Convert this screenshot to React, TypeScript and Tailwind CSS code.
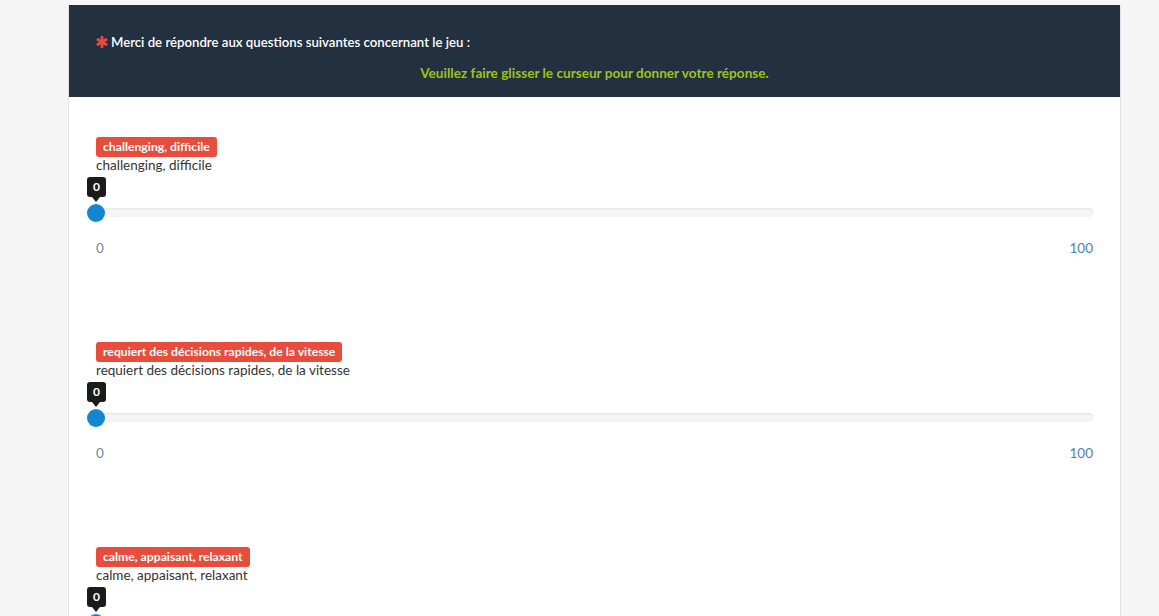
const questions = [
  "challenging, difficile",
  "requiert des décisions rapides, de la vitesse",
  "calme, appaisant, relaxant",
];

const Asterisk = () => (
  <svg width="12" height="12" viewBox="0 0 12 12" className="mr-[3px] inline-block">
    <g fill="#e74c3c">
      <rect x="4.6" y="0" width="2.8" height="12" rx="0.6" />
      <rect x="4.6" y="0" width="2.8" height="12" rx="0.6" transform="rotate(60 6 6)" />
      <rect x="4.6" y="0" width="2.8" height="12" rx="0.6" transform="rotate(-60 6 6)" />
    </g>
  </svg>
);

// valeur à 0 : poignée et bulle collées au début de la piste
const Slider = () => (
  <div className="flex flex-col">
    <div className="relative h-[27px]">
      <div className="absolute left-[-9px] top-0 flex h-[20px] w-[19px] items-center justify-center rounded-[3px] bg-[#1b1b1b] text-[12px] font-bold text-white">
        0
      </div>
      <div className="absolute left-[-4px] top-[20px] h-0 w-0 border-x-[4px] border-t-[5px] border-x-transparent border-t-[#1b1b1b]" />
    </div>
    <div className="relative mt-[4px] h-[9px] rounded-[4px] bg-[#f5f5f5] shadow-[inset_0_1px_2px_rgba(0,0,0,0.08)]">
      <div className="absolute left-[-9px] top-[-4px] h-[18px] w-[18px] rounded-full bg-[#1287d0]" />
    </div>
  </div>
);

const Question = ({ label }: { label: string }) => (
  <div className="flex flex-col items-start px-[27px] pt-[40px] pb-[46px]">
    <span className="h-[20px] rounded-[3px] bg-[#e74c3c] px-[7px] text-[12.2px] font-bold leading-[20px] text-white">
      {label}
    </span>
    <div className="text-[13.5px] leading-[16px] text-[#333]">{label}</div>
    <div className="mt-[4px] w-full">
      <Slider />
    </div>
    <div className="mt-[23px] flex w-full justify-between text-[13.5px] leading-[16px]">
      <span className="text-[#6b87a8]">0</span>
      <span className="text-[#4f80bd]">100</span>
    </div>
  </div>
);

export default function App() {
  return (
    <div className="min-h-screen bg-[#f5f5f5] pt-[5px] font-['Lato','Liberation_Sans',sans-serif]">
      <div className="ml-[68px] w-[1053px] border-x border-[#e2e2e2] bg-white">
        <div className="bg-[#233040] px-[27px] pb-[14px] pt-[27px]">
          <div className="flex items-center text-[13.2px] font-semibold leading-[20px] text-white">
            <Asterisk />
            Merci de répondre aux questions suivantes concernant le jeu :
          </div>
          <div className="mt-[11px] text-center text-[13.6px] font-bold leading-[20px] text-[#9bc31c]">
            Veuillez faire glisser le curseur pour donner votre réponse.
          </div>
        </div>
        {questions.map((q) => (
          <Question key={q} label={q} />
        ))}
      </div>
    </div>
  );
}
